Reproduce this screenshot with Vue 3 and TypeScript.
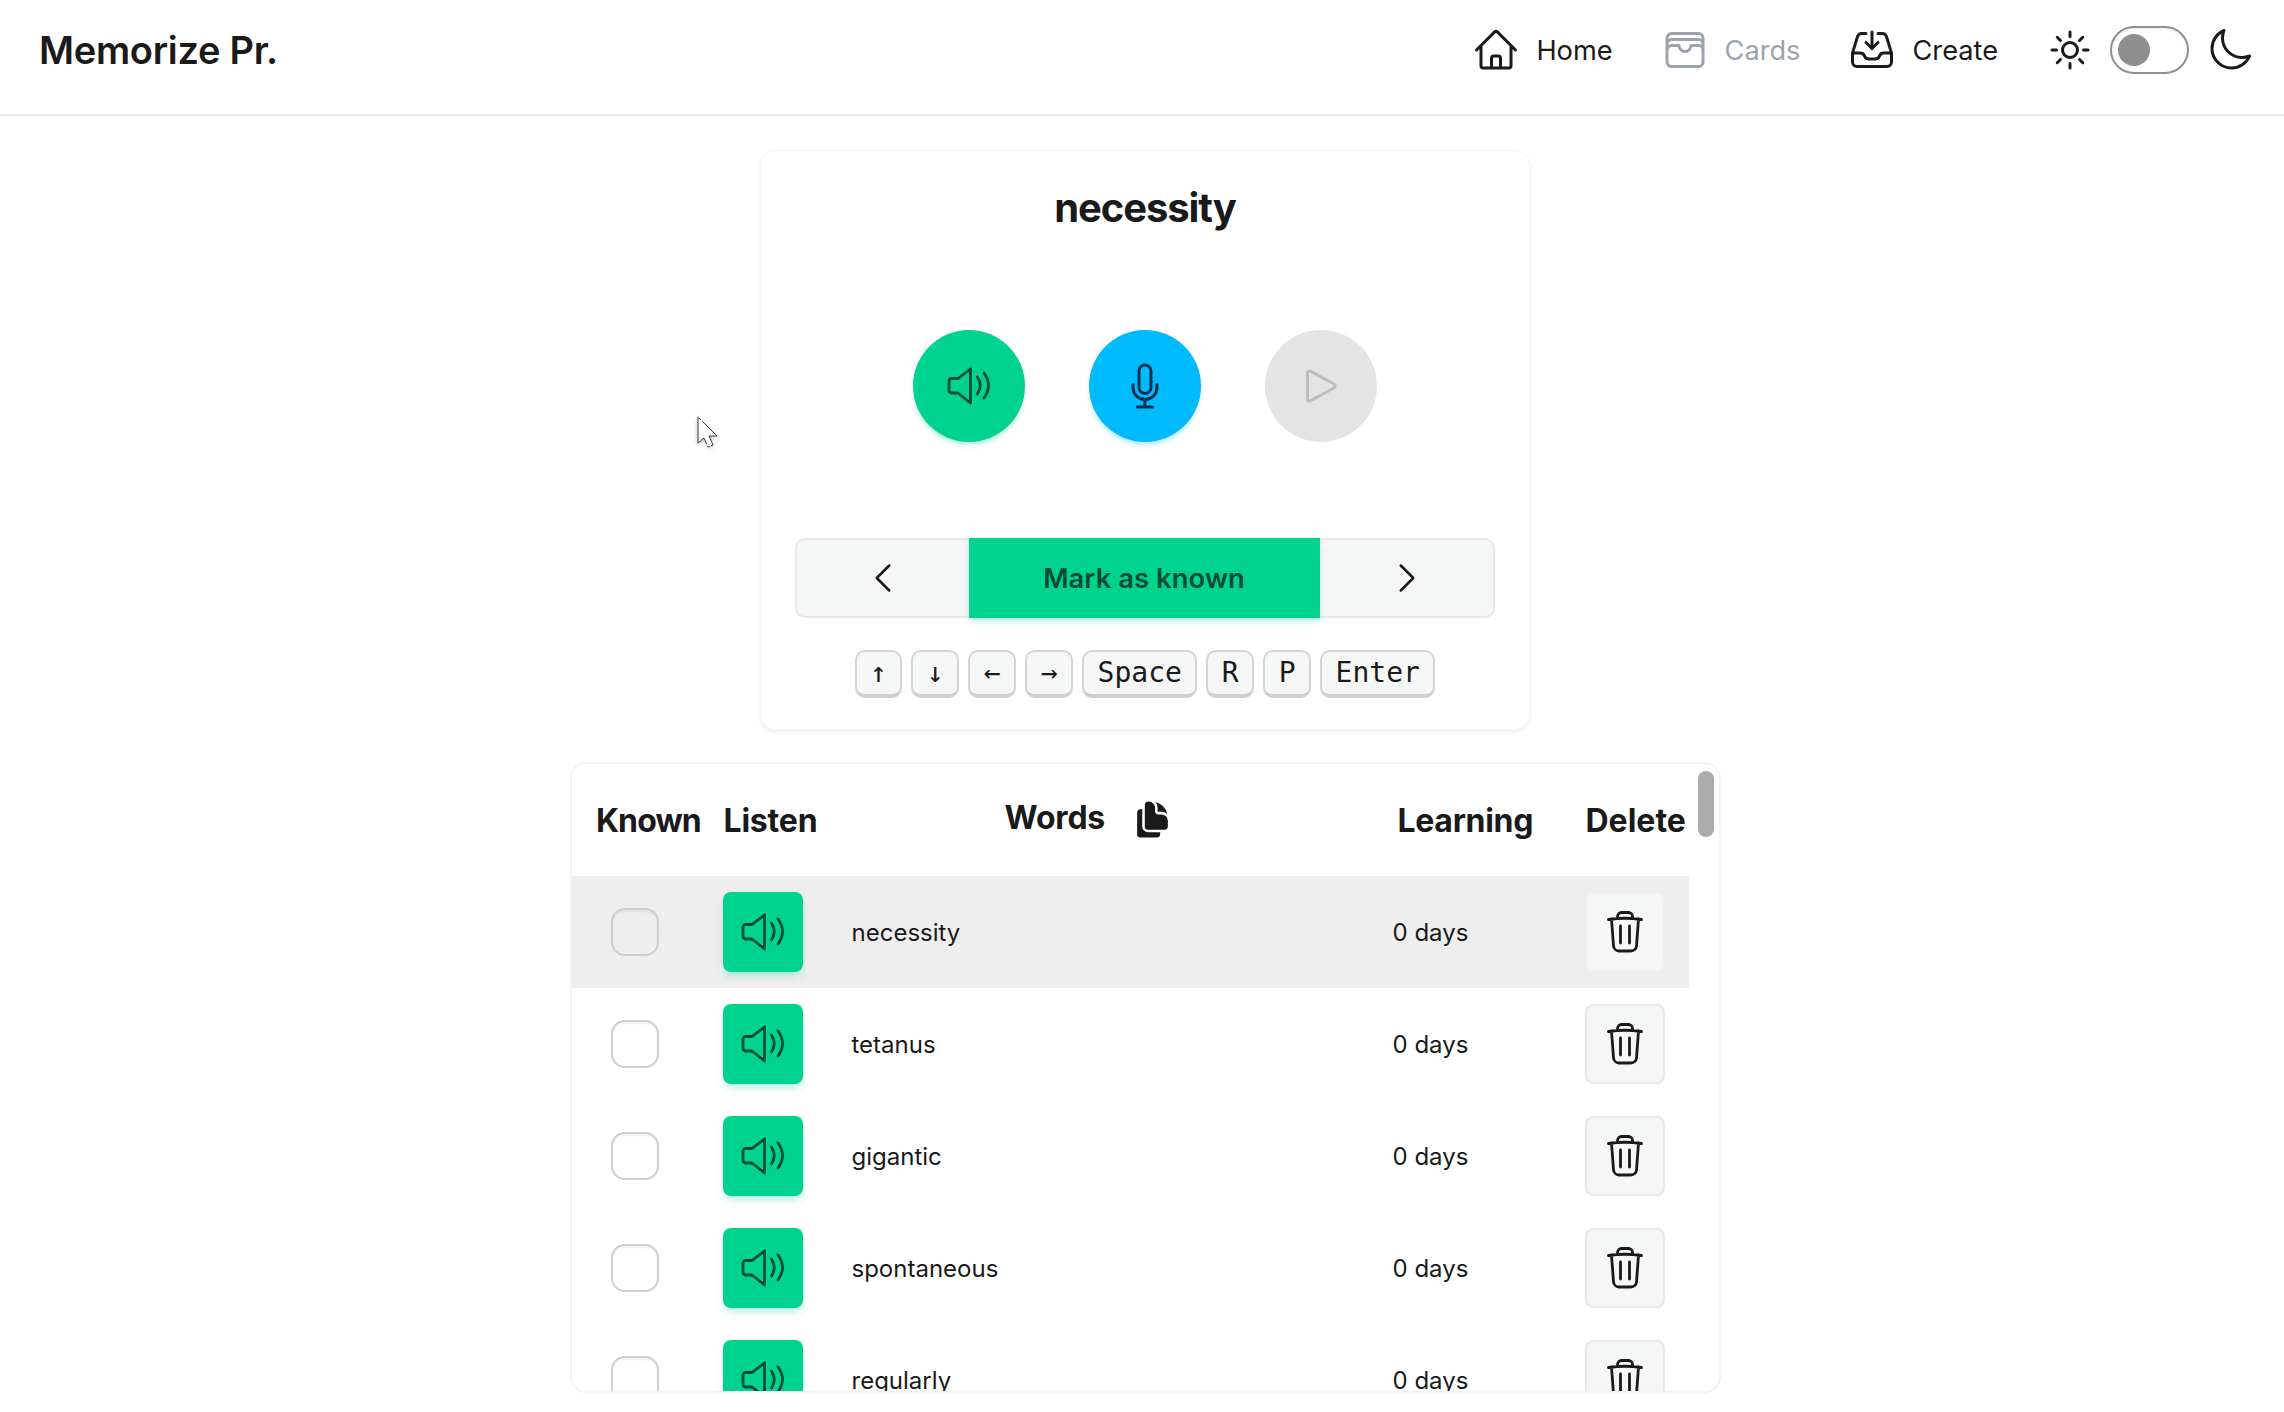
<script setup lang="ts">
interface Word { text: string; days: number }
const words: Word[] = [
  { text: 'necessity', days: 0 },
  { text: 'tetanus', days: 0 },
  { text: 'gigantic', days: 0 },
  { text: 'spontaneous', days: 0 },
  { text: 'regularly', days: 0 },
]
const keys: string[] = ['↑', '↓', '←', '→', 'Space', 'R', 'P', 'Enter']
</script>

<template>
  <div class="page">
    <nav class="nav">
      <div class="logo">Memorize Pr.</div>
      <div class="links">
        <a class="link">
          <svg class="i48" viewBox="0 0 24 24"><path d="m2.25 12 8.954-8.955c.44-.439 1.152-.439 1.591 0L21.75 12M4.5 9.75v10.125c0 .621.504 1.125 1.125 1.125H9.75v-4.875c0-.621.504-1.125 1.125-1.125h2.25c.621 0 1.125.504 1.125 1.125V21h4.125c.621 0 1.125-.504 1.125-1.125V9.75M8.25 21h8.25" /></svg>
          <span>Home</span>
        </a>
        <a class="link muted">
          <svg class="i48" viewBox="0 0 24 24"><path d="M21 12a2.25 2.25 0 0 0-2.25-2.25H15a3 3 0 1 1-6 0H5.25A2.25 2.25 0 0 0 3 12m18 0v6a2.25 2.25 0 0 1-2.25 2.25H5.25A2.25 2.25 0 0 1 3 18v-6m18 0V9M3 12V9m18 0a2.25 2.25 0 0 0-2.25-2.25H5.25A2.25 2.25 0 0 0 3 9m18 0V6a2.25 2.25 0 0 0-2.25-2.25H5.25A2.25 2.25 0 0 0 3 6v3" /></svg>
          <span>Cards</span>
        </a>
        <a class="link">
          <svg class="i48" viewBox="0 0 24 24"><path d="M9 3.75H6.912a2.25 2.25 0 0 0-2.15 1.588L2.35 13.177a2.25 2.25 0 0 0-.1.661V18a2.25 2.25 0 0 0 2.25 2.25h15A2.25 2.25 0 0 0 21.75 18v-4.162c0-.224-.034-.447-.1-.661L19.24 5.338a2.25 2.25 0 0 0-2.15-1.588H15M2.25 13.5h3.86a2.25 2.25 0 0 1 2.012 1.244l.256.512a2.25 2.25 0 0 0 2.013 1.244h3.218a2.25 2.25 0 0 0 2.013-1.244l.256-.512a2.25 2.25 0 0 1 2.013-1.244h3.859M12 3v8.25m0 0-3-3m3 3 3-3" /></svg>
          <span>Create</span>
        </a>
        <div class="theme">
          <svg class="i48" viewBox="0 0 24 24"><path d="M12 3v2.25m6.364.386-1.591 1.591M21 12h-2.25m-.386 6.364-1.591-1.591M12 18.75V21m-4.773-4.227-1.591 1.591M5.25 12H3m4.227-4.773L5.636 5.636M15.75 12a3.75 3.75 0 1 1-7.5 0 3.75 3.75 0 0 1 7.5 0Z" /></svg>
          <div class="toggle"><div class="knob"></div></div>
          <svg class="i48" viewBox="0 0 24 24"><path d="M21.752 15.002A9.72 9.72 0 0 1 18 15.75c-5.385 0-9.75-4.365-9.75-9.75 0-1.33.266-2.597.748-3.752A9.753 9.753 0 0 0 3 11.25C3 16.635 7.365 21 12.75 21a9.753 9.753 0 0 0 9.002-5.998Z" /></svg>
        </div>
      </div>
    </nav>

    <main class="main">
      <section class="card">
        <h1 class="title">necessity</h1>
        <div class="circles">
          <button class="circle green">
            <svg class="speaker" viewBox="0 0 48 48"><path d="M24.5 7 12 16.5H5.5a2.5 2.5 0 0 0-2.5 2.5v9.5a2.5 2.5 0 0 0 2.5 2.5H12L24.5 41Z" /><path d="M31.5 15Q37 23.5 31.5 32M38 11Q47 23.5 38 36" /></svg>
          </button>
          <button class="circle blue">
            <svg class="i48" viewBox="0 0 24 24"><path d="M12 18.75a6 6 0 0 0 6-6v-1.5m-6 7.5a6 6 0 0 1-6-6v-1.5m6 7.5v3.75m-3.75 0h7.5M12 15.75a3 3 0 0 1-3-3V4.5a3 3 0 1 1 6 0v8.25a3 3 0 0 1-3 3Z" /></svg>
          </button>
          <button class="circle gray">
            <svg class="i48" viewBox="0 0 24 24"><path d="M5.25 5.653c0-.856.917-1.398 1.667-.986l11.54 6.347a1.125 1.125 0 0 1 0 1.972l-11.54 6.347a1.125 1.125 0 0 1-1.667-.986V5.653Z" /></svg>
          </button>
        </div>
        <div class="group">
          <button class="side">
            <svg class="i40" viewBox="0 0 24 24"><path d="M15.75 19.5 8.25 12l7.5-7.5" /></svg>
          </button>
          <button class="mark">Mark as known</button>
          <button class="side">
            <svg class="i40" viewBox="0 0 24 24"><path d="m8.25 4.5 7.5 7.5-7.5 7.5" /></svg>
          </button>
        </div>
        <div class="keys">
          <kbd v-for="k in keys" :key="k" class="kbd">{{ k }}</kbd>
        </div>
      </section>

      <section class="table">
        <div class="thumb"></div>
        <div class="row head">
          <div class="th known">Known</div>
          <div class="th listen-th">Listen</div>
          <div class="th words">
            <span>Words</span>
            <svg class="copy" viewBox="0 0 24 24"><path d="M7.5 3.375c0-1.036.84-1.875 1.875-1.875h.375a3.75 3.75 0 0 1 3.75 3.75v1.875C13.5 8.161 14.34 9 15.375 9h1.875A3.75 3.75 0 0 1 21 12.75v3.375C21 17.16 20.16 18 19.125 18h-9.75A1.875 1.875 0 0 1 7.5 16.125V3.375Z" /><path d="M15 5.25a5.23 5.23 0 0 0-1.279-3.434 9.768 9.768 0 0 1 6.963 6.963A5.23 5.23 0 0 0 17.25 7.5h-1.875A.375.375 0 0 1 15 7.125V5.25Z" /><path d="M4.875 6H6v10.125A3.375 3.375 0 0 0 9.375 19.5H16.5v1.125c0 1.035-.84 1.875-1.875 1.875h-9.75A1.875 1.875 0 0 1 3 20.625V7.875C3 6.839 3.84 6 4.875 6Z" /></svg>
          </div>
          <div class="th learning">Learning</div>
          <div class="th delete-th">Delete</div>
        </div>
        <div v-for="(w, i) in words" :key="w.text" class="row" :class="{ active: i === 0 }">
          <div class="cell"><span class="check"></span></div>
          <div class="cell">
            <button class="listen">
              <svg class="speaker" viewBox="0 0 48 48"><path d="M24.5 7 12 16.5H5.5a2.5 2.5 0 0 0-2.5 2.5v9.5a2.5 2.5 0 0 0 2.5 2.5H12L24.5 41Z" /><path d="M31.5 15Q37 23.5 31.5 32M38 11Q47 23.5 38 36" /></svg>
            </button>
          </div>
          <div class="cell">{{ w.text }}</div>
          <div class="cell">{{ w.days }} days</div>
          <div class="cell">
            <button class="del">
              <svg class="trash" viewBox="0 0 36 44"><path d="M1.5 9.5Q18 7 34.5 9.5M10.5 8V6.5a4 4 0 0 1 4-4h7a4 4 0 0 1 4 4V8M4.5 9l2 27a5.5 5.5 0 0 0 5.5 5h12a5.5 5.5 0 0 0 5.5-5l2-27M13.5 16v17M22.5 16v17" /></svg>
            </button>
          </div>
        </div>
      </section>
    </main>

    <svg class="cursor" viewBox="0 0 22 36">
      <path d="M2 1v26l6-5 4 9 5-2-4-9h8Z" fill="#fff" stroke="#222" stroke-width="0.9" stroke-dasharray="40 3 2 2" />
    </svg>
  </div>
</template>

<style>
html, body { margin: 0; background: #fff; overflow: hidden; }
</style>

<style scoped>
.page {
  position: relative;
  height: 1412px;
  overflow: hidden;
  font-family: Inter, "Noto Sans", sans-serif;
  color: #1a1a1a;
  background: #fff;
}
button { border: 0; padding: 0; margin: 0; font-family: inherit; }
svg { display: block; flex: none; fill: none; stroke: currentColor; stroke-width: 1.5; stroke-linecap: round; stroke-linejoin: round; }
.i48 { width: 48px; height: 48px; }
.i40 { width: 40px; height: 40px; }
.speaker { width: 48px; height: 48px; stroke-width: 2.8; margin-left: 2px; }
.trash { width: 36px; height: 44px; stroke-width: 2.8; }

.nav {
  height: 114px;
  display: flex;
  align-items: center;
  justify-content: space-between;
  padding: 0 30px 0 39px;
  border-bottom: 2px solid #ececec;
  box-shadow: 0 1px 2px rgba(0, 0, 0, .05);
}
.logo { font-size: 38px; font-weight: 600; letter-spacing: -0.3px; margin-top: -14px; }
.links { display: flex; align-items: center; gap: 48px; margin-top: -14px; }
.link { display: flex; align-items: center; gap: 16px; font-size: 27.2px; }
.muted { color: #9ca3af; }
.theme { display: flex; align-items: center; gap: 16px; }
.toggle {
  width: 79px;
  height: 48px;
  box-sizing: border-box;
  margin-right: 1px;
  border: 2px solid #8f8f8f;
  border-radius: 24px;
  padding: 6px;
  box-shadow: inset 0 2px 3px rgba(0, 0, 0, .06);
}
.knob { width: 32px; height: 32px; border-radius: 50%; background: #8e8e8e; }

.main { display: flex; flex-direction: column; align-items: center; padding: 34px 0 0 6px; }
.card {
  width: 770px;
  height: 580px;
  box-sizing: border-box;
  padding: 0 34px;
  border: 1px solid #f5f5f5;
  border-radius: 16px;
  box-shadow: 0 2px 4px rgba(0, 0, 0, .07);
  display: flex;
  flex-direction: column;
  align-items: center;
}
.title { margin: 30px 0 0; font-size: 40px; line-height: 53px; font-weight: 700; letter-spacing: -1.1px; }
.circles { display: flex; gap: 64px; margin-top: 96px; }
.circle { width: 112px; height: 112px; border-radius: 50%; display: flex; align-items: center; justify-content: center; }
.green { background: #00d390; color: #004c39; box-shadow: 0 4px 6px -2px rgba(0, 211, 144, .4); }
.blue { background: #00bafe; color: #042e49; box-shadow: 0 4px 6px -2px rgba(0, 186, 254, .4); }
.gray { background: #e4e4e4; color: #bdbdbd; }
.group {
  display: flex;
  align-self: stretch;
  height: 80px;
  margin-top: 96px;
  box-sizing: border-box;
  border: 2px solid #e8e8e8;
  border-radius: 10px;
  background: #f5f6f6;
}
.side { flex: 1; background: none; color: #1a1a1a; display: flex; align-items: center; justify-content: center; }
.mark {
  width: 351px;
  height: 80px;
  margin: -2px 1px -2px -1px;
  background: #00d390;
  color: #004c39;
  font-size: 27.5px;
  font-weight: 600;
  box-shadow: 0 4px 8px -2px rgba(0, 211, 144, .4);
}
.keys { display: flex; gap: 9px; margin-top: 32px; }
.kbd {
  height: 48px;
  box-sizing: border-box;
  padding: 0 13.5px;
  display: flex;
  align-items: center;
  justify-content: center;
  border: 2px solid #d4d4d4;
  border-bottom: 4px solid #cfcfcf;
  border-radius: 10px;
  background: #f5f6f6;
  font-family: "DejaVu Sans Mono", monospace;
  font-size: 28px;
  line-height: 1;
}

.table {
  position: relative;
  width: 1151px;
  height: 631px;
  margin-top: 32px;
  box-sizing: border-box;
  overflow: hidden;
  border: 2px solid #f3f3f3;
  border-radius: 16px;
}
.thumb { position: absolute; top: 7px; right: 5px; width: 16px; height: 66px; border-radius: 8px; background: #ababab; }
.row {
  display: grid;
  grid-template-columns: 151px 129px 541px 192px 104px;
  width: 1117px;
  height: 112px;
  align-items: center;
  font-size: 24px;
}
.th { font-size: 32px; font-weight: 700; white-space: nowrap; letter-spacing: -0.2px; }
.known { padding-left: 24.5px; letter-spacing: -0.9px; }
.listen-th { padding-left: 1px; }
.delete-th { letter-spacing: 0; padding-left: 1px; }
.words { display: flex; align-items: center; gap: 27px; padding-left: 153px; margin-top: -6px; }
.copy { width: 41px; height: 41px; fill: #1a1a1a; stroke: none; margin-top: 4px; }
.learning { padding-left: 5px; letter-spacing: -0.3px; }
.active { background: #eee; }
.cell { display: flex; align-items: center; }
.check {
  width: 48px;
  height: 48px;
  margin-left: 39px;
  box-sizing: border-box;
  border: 2px solid #cfcfcf;
  border-radius: 14px;
  box-shadow: inset 0 2px 2px rgba(0, 0, 0, .05);
}
.listen {
  width: 80px;
  height: 80px;
  border-radius: 8px;
  background: #00d390;
  color: #004c39;
  display: flex;
  align-items: center;
  justify-content: center;
  box-shadow: 0 5px 8px -2px rgba(0, 211, 144, .35);
}
.del {
  width: 80px;
  height: 80px;
  box-sizing: border-box;
  border: 2px solid #e8e8e8;
  border-radius: 8px;
  background: #f5f6f6;
  color: #1a1a1a;
  display: flex;
  align-items: center;
  justify-content: center;
}
.active .del { border-color: #f0f0f0; }
.cursor { position: absolute; left: 696px; top: 416px; width: 22px; height: 36px; filter: drop-shadow(0 1px 2px rgba(0,0,0,.25)); }
</style>
